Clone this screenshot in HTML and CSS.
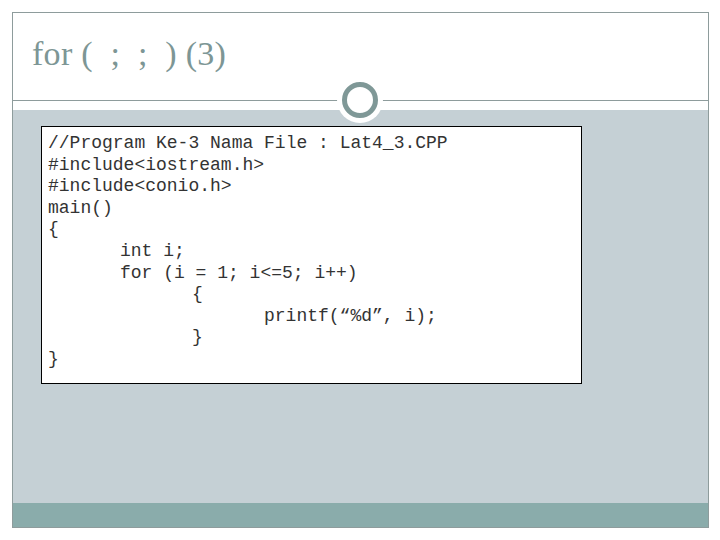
FILE: index.html
```html
<!DOCTYPE html>
<html>
<head>
<meta charset="utf-8">
<link rel="stylesheet" href="styles.css">
</head>
<body>
<div class="slide">
  <div class="header">
    <h1 class="title">for (  ;  ;  ) (3)</h1>
  </div>
  <div class="rule">
    <div class="ring"></div>
  </div>
  <div class="gap"></div>
  <div class="content">
    <pre class="code">//Program Ke-3 Nama File : Lat4_3.CPP
#include&lt;iostream.h&gt;
#include&lt;conio.h&gt;
main()
{
	int i;
	for (i = 1; i&lt;=5; i++)
		{
			printf(“%d”, i);
		}
}</pre>
  </div>
  <div class="footer"></div>
</div>
</body>
</html>
```
FILE: styles.css
```css
html, body {
  margin: 0;
  padding: 0;
  background: #ffffff;
}
.slide {
  margin: 12px;
  width: 697px;
  height: 516px;
  box-sizing: border-box;
  border: 1px solid #8e9c9c;
  display: flex;
  flex-direction: column;
  background: #ffffff;
}
.header {
  height: 87px;
  display: flex;
  align-items: flex-start;
}
.title {
  margin: 0;
  padding: 22px 0 0 19px;
  font-family: "Liberation Serif", "Times New Roman", serif;
  font-weight: normal;
  font-size: 34px;
  line-height: 38px;
  letter-spacing: 0.3px;
  color: #7d9695;
  white-space: pre;
}
.rule {
  position: relative;
  height: 1px;
  background: #8e9c9c;
}
.ring {
  position: absolute;
  left: 329px;
  top: -18px;
  width: 26px;
  height: 26px;
  border-radius: 50%;
  border: 5px solid #7f9897;
  background: #ffffff;
  box-shadow: 0 0 0 5px #ffffff;
  z-index: 2;
}
.gap {
  height: 9px;
}
.content {
  flex: 1;
  background: #c5d0d5;
  padding: 16px 0 0 28px;
}
.code {
  margin: 0;
  width: 541px;
  height: 258px;
  box-sizing: border-box;
  border: 1px solid #000000;
  background: #ffffff;
  padding: 6px 6px 4px;
  font-family: "Liberation Mono", "Courier New", monospace;
  font-size: 18px;
  line-height: 21.6px;
  color: #333333;
  tab-size: 72px;
  -moz-tab-size: 72px;
}
.footer {
  height: 24px;
  background: #8aacab;
}
```
